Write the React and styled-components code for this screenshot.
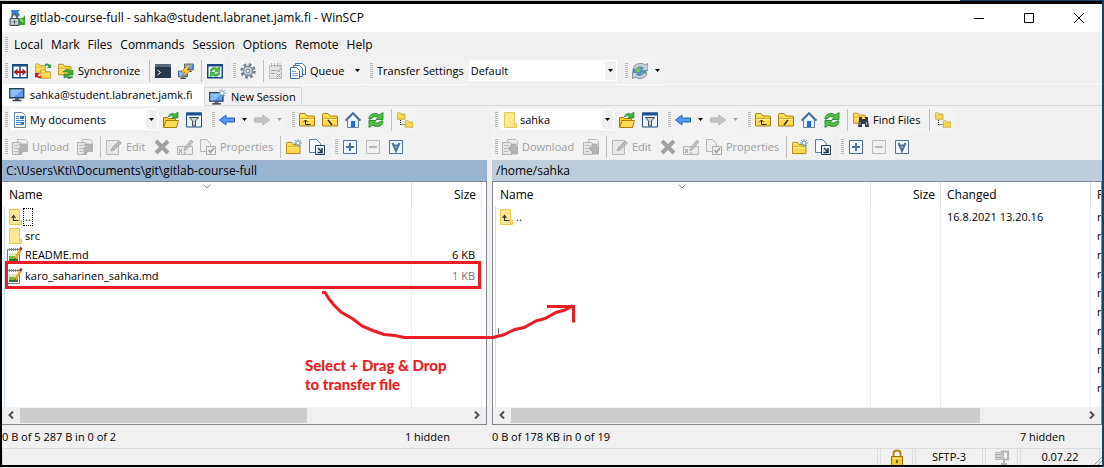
import React from "react";
import styled, { createGlobalStyle } from "styled-components";

const GlobalStyle = createGlobalStyle`
  * { box-sizing: border-box; }
  body { margin: 0; }
  body, button, select {
    font-family: "Open Sans", "Noto Sans", sans-serif;
    font-size: 11px;
    line-height: 16px;
    color: #000;
  }
  button, select { border: 0; background: none; padding: 0; margin: 0; }
`;

const Desktop = styled.div`
  min-height: 100vh;
  display: flex;
  flex-direction: column;
  padding: 1px 2px 1px 0;
  background: linear-gradient(90deg, #c9d1cd 87%, #17456a 87%) top / 100% 1px no-repeat,
    linear-gradient(#f0f0f0, #f0f0f0) bottom / 100% 1px no-repeat, #17456a;
`;
const Window = styled.main`
  flex: 1;
  display: flex;
  flex-direction: column;
  border: solid #000;
  border-width: 3px 0 2px 2px;
  background: #f0f0f0;
  overflow: hidden;
`;
const TitleBar = styled.header`
  display: flex;
  align-items: center;
  height: 28px;
  padding-left: 7px;
  gap: 4px;
  background: #fff;
`;
const Title = styled.h1`
  flex: 1;
  margin: 0;
  font-size: 12px;
  font-weight: 400;
`;
const CaptionButton = styled.button`
  display: grid;
  place-items: center;
  width: 46px;
  height: 28px;
`;
const MenuBar = styled.nav`
  display: flex;
  align-items: center;
  height: 25px;
  padding-left: 3px;
`;
const MenuItem = styled.button`
  padding: 0 2px 0 6px;
  font-size: 12px;
  white-space: nowrap;
`;
const ToolBar = styled.div`
  display: flex;
  align-items: center;
  height: 27px;
`;
const ToolGroup = styled.div`
  display: flex;
  align-items: center;
  height: 25px;
  padding-left: 3px;
  margin-right: 4px;
  background: #f2f2f2;
`;
const Grip = styled.span`
  width: 3px;
  height: 16px;
  background: repeating-linear-gradient(#b4b4b4 0 1px, transparent 1px 2px);
`;
const Separator = styled.span`
  width: 1px;
  height: 22px;
  margin: 0 1px 0 4px;
  background: #bdbdbd;
`;
const ToolButton = styled.button`
  display: flex;
  align-items: center;
  gap: 4px;
  height: 24px;
  min-width: ${(p) => p.$minWidth || 0}px;
  padding: 0 3px 0 4px;
  white-space: nowrap;
  color: ${(p) => (p.disabled ? "#a0a0a0" : "#000")};
`;
const Label = styled.label`
  padding: 0 3px 0 4px;
  white-space: nowrap;
`;
const Picker = styled.span`
  display: grid;
  align-items: center;
  width: ${(p) => p.$width}px;
  height: 21px;
  margin: 0 1px 0 2px;
  background: #fff;
  & > * { grid-area: 1 / 1; }
  & > svg { margin-left: 2px; pointer-events: none; }
`;
const PickerSelect = styled.select`
  width: 100%;
  height: 21px;
  padding-left: ${(p) => (p.$icon ? 20 : 2)}px;
  appearance: none;
`;
const PickerArrow = styled.span`
  display: grid;
  place-items: center;
  justify-self: end;
  width: 11px;
  height: 19px;
  margin-right: 1px;
  background: #f0f0f0;
  pointer-events: none;
`;
const Tabs = styled.div`
  display: flex;
  align-items: flex-end;
  height: 22px;
  border-top: 1px solid #fafafa;
  box-shadow: inset 0 -1px #d9d9d9;
`;
const Tab = styled.button`
  display: flex;
  align-items: center;
  gap: 5px;
  height: ${(p) => (p.$active ? 22 : 19)}px;
  min-width: ${(p) => (p.$active ? 202 : 98)}px;
  padding: 0 4px 0 ${(p) => (p.$active ? 7 : 4)}px;
  border: solid #d9d9d9;
  border-width: ${(p) => (p.$active ? "0" : "1px")};
  background: ${(p) => (p.$active ? "#fff" : "#f0f0f0")};
  white-space: nowrap;
`;
const Commander = styled.div`
  flex: 1;
  position: relative;
  display: grid;
  grid-template-columns: 485fr 5px 610fr;
`;
const Panel = styled.section`
  grid-column: ${(p) => p.$column};
  grid-row: 1;
  display: flex;
  flex-direction: column;
  min-width: 0;
`;
const PathBar = styled.div`
  height: 21px;
  padding: 3px 4px;
  background: ${(p) => (p.$active ? "#99b4d1" : "#bfcddb")};
  font-size: 12px;
  white-space: nowrap;
  overflow: hidden;
`;
const ListBox = styled.div`
  flex: 1;
  display: flex;
  flex-direction: column;
  min-height: 244px;
  border: 1px solid #828790;
  border-left-width: ${(p) => (p.$remote ? 1 : 0)}px;
  background: #fff;
`;
const columnLine = (offset) =>
  `linear-gradient(#e5effa, #e5effa) right ${offset}px top 0 / 1px 100% no-repeat`;
const Rows = styled.div`
  flex: 1;
  background: ${(p) => p.$lines.map(columnLine).join(", ")},
    linear-gradient(#c4dcf6, #c4dcf6) 2px 25px / 1px 100% no-repeat;
`;
const Table = styled.table`
  width: 100%;
  table-layout: fixed;
  border-collapse: separate;
  border-spacing: 0;
`;
const Head = styled.th`
  width: ${(p) => (p.$width ? p.$width + "px" : "auto")};
  height: 25px;
  padding: 0 ${(p) => (p.$last ? 0 : 5)}px 0 ${(p) => (p.$empty ? 0 : p.$narrow ? 6 : 7)}px;
  border-right: ${(p) => (p.$last ? 0 : 1)}px solid #e0e0e0;
  font-size: 12px;
  font-weight: 400;
  text-align: ${(p) => p.$align || "left"};
  position: relative;
  background: #fff;
  white-space: nowrap;
  overflow: hidden;
`;
const SortMark = styled.svg`
  position: absolute;
  top: 2px;
  left: calc(50% - 4px);
`;
const Row = styled.tr`
  height: ${(p) => (p.$dropped ? 24 : 19)}px;
`;
const Cell = styled.td`
  padding: 0 ${(p) => (p.$align ? 7 : 0)}px 0 ${(p) => (p.$narrow ? 6 : 5)}px;
  text-align: ${(p) => p.$align || "left"};
  color: ${(p) => (p.$dim ? "#777" : "#000")};
  white-space: nowrap;
  overflow: hidden;
`;
const FileName = styled.span`
  display: flex;
  align-items: center;
  gap: 2px;
`;
const Focus = styled.span`
  padding: 0 1px;
  margin: 0 -1px;
  outline: ${(p) => (p.$on ? "1px dotted #000" : "none")};
`;
const ScrollBar = styled.div`
  display: flex;
  align-items: center;
  height: 17px;
  padding-bottom: 1px;
  background: #f0f0f0;
`;
const ScrollButton = styled.button`
  display: grid;
  place-items: center;
  width: 18px;
  height: 15px;
`;
const Track = styled.div`
  flex: 1;
  height: 15px;
`;
const Thumb = styled.div`
  width: ${(p) => p.$share}%;
  height: 15px;
  background: #cdcdcd;
`;
const PanelStatus = styled.div`
  display: flex;
  justify-content: space-between;
  height: 23px;
  padding: 4px 37px 0 0;
`;
const StatusBar = styled.footer`
  display: flex;
  gap: 2px;
  height: 17px;
  border-top: 1px solid #dcdcdc;
`;
const StatusCell = styled.div`
  display: flex;
  justify-content: center;
  width: ${(p) => (p.$width ? p.$width + "px" : "auto")};
  flex: ${(p) => (p.$width ? "none" : "1")};
  border: solid #dcdcdc;
  border-width: 0 1px;
`;
const SizeGrip = styled.span`
  position: relative;
  width: 0;
  & > svg { position: absolute; right: 0; bottom: 0; }
`;
const FramedArea = styled.div`
  grid-column: 1;
  grid-row: 1;
  position: relative;
  pointer-events: none;
`;
const Frame = styled.span`
  position: absolute;
  left: 3px;
  right: 6px;
  top: 155px;
  height: 28px;
  border: 3px solid #ed1c24;
`;
const ArrowDrawing = styled.svg`
  position: absolute;
  left: 310px;
  top: 120px;
  pointer-events: none;
`;
const Note = styled.p`
  position: absolute;
  left: 303px;
  top: 250px;
  margin: 0;
  font: 900 15px/19px Lato, sans-serif;
  color: #ed1c24;
`;

const Svg = ({ w = 16, h = 16, children }) => (
  <svg width={w} height={h} viewBox={`0 0 ${w} ${h}`} fill="none" aria-hidden="true">{children}</svg>
);
const Folder = ({ x = 0, y = 0, s = 1 }) => (
  <g transform={`translate(${x} ${y}) scale(${s})`}>
    <path d="M.5 14V2.500q0-1 1-1H6L8 4h6.500q1 0 1 1v9z" fill="#fbd94b" stroke="#ad7c0c" />
    <path d="M1 6.500h14" stroke="#d6a520" />
    <path d="M1.500 3h4M1.500 7.500h13" stroke="#fff1a0" />
  </g>
);
const AppIcon = () => (
  <Svg w={17} h={17}>
    <path d="M2 0h9L9 2l2 3-3 3-3-3-2 2z" fill="#3880dc" />
    <path d="m16 5v10H8l2-2-2-3 3-2 3 0z" fill="#2faa2c" />
    <path d="m11 9 3 3" stroke="#8be66b" strokeWidth="2" />
    <path d="M3 9V7q0-3 2.500-3T8 7v2" stroke="#59636d" strokeWidth="1.600" />
    <path d="M1 8.500h9v7H1z" fill="#a6b1bd" stroke="#44505b" />
    <path d="M2 10h7M2 13h7" stroke="#e1e6eb" />
    <path d="M5.500 10.500v3" stroke="#333" />
  </Svg>
);
const Compare = () => (
  <Svg>
    <path d="M.75 1.750h14.500v13H.750zM8 2v13" fill="#fff" stroke="#164a86" strokeWidth="1.500" />
    <path d="M1 2.500h14" stroke="#164a86" strokeWidth="2" />
    <path d="m1.500 9 4-3.500V8h5V5.500l4 3.500-4 3.500V10h-5v2.500z" fill="#b51418" />
  </Svg>
);
const SyncBrowse = () => (
  <Svg>
    <Folder s={0.66} /><Folder x={5.5} y={6} s={0.66} />
    <path d="M10 2q4-2 5 3" stroke="#2f9e35" strokeWidth="2" /><path d="m12 5h4V1z" fill="#2f9e35" />
    <path d="M6 14q-4 1-5-3" stroke="#d01818" strokeWidth="2" /><path d="M0 15v-5h5z" fill="#d01818" />
  </Svg>
);
const SyncFolder = () => (
  <Svg>
    <Folder s={0.84} />
    <path d="M5 9q4-5 8-1l2-1v5h-5l1.500-2Q9 8 5 9z" fill="#3cae3c" stroke="#1d7a26" strokeWidth=".6" />
    <path d="M15 14q-4 3-7 0l-2 1v-4h4l-1 2q3 1 6 1z" fill="#3cae3c" stroke="#1d7a26" strokeWidth=".6" />
  </Svg>
);
const Terminal = () => (
  <Svg>
    <path d="M0 1h16v14H0z" fill="#2a3749" /><path d="M0 1h16v3H0z" fill="#57677c" />
    <path d="m2.500 7 3 2.500-3 2.500" stroke="#fff" />
  </Svg>
);
const Screen = ({ x = 0, y = 0, s = 1 }) => (
  <g transform={`translate(${x} ${y}) scale(${s})`}>
    <path d="M.75 1.750h14v9H.750z" fill="#5c9cf0" stroke="#2d3e54" strokeWidth="1.300" />
    <path d="M1.500 2.500h12.500L5 10H1.500z" fill="#a4ccfa" opacity=".7" />
    <path d="M6 11h4v2H6z" fill="#56606c" /><path d="M3.500 13.500h9" stroke="#36424f" strokeWidth="1.500" />
  </g>
);
const Monitor = () => <Svg><Screen /></Svg>;
const MonitorNew = () => (
  <Svg w={17}>
    <Screen y={2} s={0.95} />
    <path d="M13 0v8M9 4h8M10 1l6 6M16 1l-6 6" stroke="#84abc7" /><circle cx="13" cy="4" r="2" fill="#fff" stroke="#84abc7" />
  </Svg>
);
const Putty = () => (
  <Svg>
    <Screen x={6} y={0} s={0.63} /><Screen x={0} y={7} s={0.63} />
    <path d="M11 1 3 9h4l-3 6 9-8H9l3-5z" fill="#ffd43e" stroke="#a56d05" strokeWidth=".7" />
  </Svg>
);
const RefreshShape = () => (
  <>
    <path d="M1 7Q1 2 7 1.500q3 0 4 1.500l4-2.500v7H8l2-2Q6 3 3 7z" fill="#4fc043" stroke="#15801e" strokeWidth=".8" />
    <path d="M15 9q0 5-6 5.500-3 0-4-1.500l-4 2.500v-7h7l-2 2q4 2 7-1.500z" fill="#4fc043" stroke="#15801e" strokeWidth=".8" />
  </>
);
const Refresh = () => <Svg><RefreshShape /></Svg>;
const SyncPanels = () => (
  <Svg>
    <path d="M.75 1.750h14.500v13H.750z" fill="#fff" stroke="#164a86" strokeWidth="1.500" />
    <path d="M1 2.500h14" stroke="#164a86" strokeWidth="2" />
    <g transform="translate(2.500 3.500) scale(.68)"><RefreshShape /></g>
  </Svg>
);
const Gear = () => (
  <Svg>
    <circle cx="8" cy="8" r="6.500" stroke="#697988" strokeWidth="2.500" strokeDasharray="2.600 2.500" />
    <circle cx="8" cy="8" r="4.500" fill="#d9e0e7" stroke="#778694" strokeWidth="1.400" />
    <circle cx="8" cy="8" r="2" fill="#f2f2f2" stroke="#697988" />
  </Svg>
);
const QueueList = () => (
  <Svg w={14}>
    <path d="M.5 2.500h12v13H.500z" fill="#e4e4e4" stroke="#bdbdbd" />
    <path d="M2.500 0v4M5.500 0v4M8.500 0v4M11 0v4" stroke="#b5b5b5" />
    <path d="M2 7.500h5M2 10.500h4M8 7l1.500 2L12 5M7.500 10.500l4 4M11.500 10.500l-4 4" stroke="#a2a2a2" />
  </Svg>
);
const Queue = () => (
  <Svg>
    <path d="M5.500.5h7l3 3v8h-10z" fill="#fff" stroke="#3f74a8" />
    <path d="M3.500 2.500h6l3 3v8h-9z" fill="#eef5fc" stroke="#3f74a8" />
    <path d="M.5 4.500h6l3 3v8h-9z" fill="#fff" stroke="#3f74a8" />
    <path d="M2 8.500h4M2 10.500h6M2 12.500h6" stroke="#7ba5d0" />
  </Svg>
);
const Globe = () => (
  <Svg>
    <circle cx="7.500" cy="8.500" r="6.500" fill="#4a93dc" stroke="#486984" />
    <path d="m3 5 4-1 2 3-2 2H4zM9 10l4-1-1 4-3 2z" fill="#75c05c" />
    <path d="M1 7Q2 0 9 .5q3 0 4 1.500l3-1.500v7H9l2.500-2.500Q7 2 4 6z" fill="#c4cfd8" stroke="#687887" strokeWidth=".7" />
    <path d="M15 10q-1 5-7 5.500-3 0-4-1.500l-3.500 1.500v-6H7l-2.500 2Q8 14 12 10z" fill="#c4cfd8" stroke="#687887" strokeWidth=".7" />
  </Svg>
);
const DocsIcon = () => (
  <Svg>
    <path d="M2.500.5h8l3 3v12h-11z" fill="#fff" stroke="#6c8799" />
    <path d="M4 4.500h3M4 6.500h3M4 8.500h8M4 10.500h5M4 12.500h8" stroke="#2f8ad0" />
    <path d="M8 4h4v3H8zM9 10h3v2H9z" fill="#2a78b8" />
  </Svg>
);
const PlainFolderShape = () => (
  <>
    <path d="M2.500.5h10v11h2v4h-12z" fill="#ffe797" stroke="#ebc84c" />
    <path d="M12.500 11.500v4" stroke="#ebc84c" />
  </>
);
const PlainFolder = () => <Svg><PlainFolderShape /></Svg>;
const ParentFolder = () => (
  <Svg>
    <PlainFolderShape />
    <path d="M6.500 7v4.500h5M4.500 9l2-2.500 2 2.500" stroke="#333" strokeWidth="1.200" />
  </Svg>
);
const OpenFolder = () => (
  <Svg>
    <path d="M.5 15V5.500h4l1 1h7V9" fill="#f5c933" stroke="#ad7c0c" />
    <path d="M.7 15.500 3 8.500h12.500l-2 7z" fill="#fddc55" stroke="#ad7c0c" />
    <path d="M5 5q2-5 7-3l3-2v6H9l2-1.500Q8 3 5 5z" fill="#43b443" stroke="#1c8028" strokeWidth=".6" />
  </Svg>
);
const Filter = () => (
  <Svg>
    <path d="M.5 1h15v14H.500z" fill="#eaf2fb" stroke="#1c508e" /><path d="M0 2h16" stroke="#1c508e" strokeWidth="3" />
    <path d="M3.500 5.500h9L9.500 9v5h-3V9z" fill="#c9d0d6" stroke="#404a53" />
  </Svg>
);
const Arrow = ({ back }) => (
  <Svg>
    <path
      d={back ? "M.5 8 7 3v3h8.500v4H7v3z" : "M15.500 8 9 3v3H.500v4H9v3z"}
      fill={back ? "#4a97f5" : "#c6c6c6"}
      stroke={back ? "#2364b8" : "#b2b2b2"}
    />
  </Svg>
);
const FolderUp = () => <Svg><Folder /><path d="M6.500 8v4.500h5M4.500 10l2-2 2 2" stroke="#222" /></Svg>;
const FolderRoot = ({ slash }) => (
  <Svg><Folder /><path d={slash ? "m10 8-4 5" : "m6 8 4 5"} stroke="#222" strokeWidth="1.300" /></Svg>
);
const Home = () => (
  <Svg>
    <path d="M2.500 8v7.500h11V8L8 2z" fill="#edf3fa" stroke="#627f9e" />
    <path d="M.5 8.500 8 1l7.500 7.500" stroke="#466c97" strokeWidth="1.800" /><path d="M6 9h4v6H6z" fill="#1c6ae0" />
  </Svg>
);
const Tree = () => (
  <Svg>
    <Folder s={0.52} /><Folder x={8} y={8} s={0.52} />
    <path d="M3.500 8v5M3.500 12.500H8" stroke="#222" strokeDasharray="1 1" />
  </Svg>
);
const Transfer = ({ down }) => (
  <Svg>
    <path d="M5.500.5h8l2 2v10h-10z" fill="#eee" stroke="#bbb" /><path d="M.5 3.500h8l1 1v11h-9z" fill="#e6e6e6" stroke="#b2b2b2" />
    <path d="M2 6.500h5M2 9.500h5M2 12.500h4" stroke="#bbb" />
    <path d={down ? "M7 8h2V5h5v3l2 0v7H9l2-2-4-2z" : "M7 15V9l2-2-2-2h8v8l-3-2-3 4z"} fill="#b4b4b4" stroke="#9f9f9f" strokeWidth=".6" />
  </Svg>
);
const Edit = () => (
  <Svg>
    <path d="M.5 1.500h12v14H.500z" fill="#e8e8e8" stroke="#b8b8b8" />
    <path d="m5 12 1-3 7-7 2.500 2L8 11z" fill="#bbb" stroke="#9d9d9d" strokeWidth=".7" />
  </Svg>
);
const Delete = () => <Svg><path d="m2 2 12 12M14 2 2 14" stroke="#a2a2a2" strokeWidth="4" /></Svg>;
const Rename = () => (
  <Svg>
    <path d="M.5 7.500h15v8H.500z" fill="#eaeaea" stroke="#b5b5b5" /><path d="m2 10 3 4M5 10l-3 4M7 14h2" stroke="#999" />
    <path d="m7 12 1-4 6-7 2 2-6 7z" fill="#c4c4c4" stroke="#a2a2a2" strokeWidth=".7" />
  </Svg>
);
const Properties = () => (
  <Svg>
    <path d="M.5.5h6l4 4v8H.500z" fill="#eee" stroke="#b8b8b8" /><path d="M6.500 7.500h9v8h-9z" fill="#eee" stroke="#aaa" />
    <path d="m8.500 11 2 2.500L14 9" stroke="#999" strokeWidth="1.500" />
  </Svg>
);
const NewFolder = () => (
  <Svg>
    <g transform="translate(0 2)"><Folder s={0.9} /></g>
    <path d="M12 0v8M8 4h8M9 1l6 6M15 1 9 7" stroke="#7499bc" /><circle cx="12" cy="4" r="2" fill="#fff" stroke="#7499bc" />
  </Svg>
);
const Shortcut = () => (
  <Svg>
    <path d="M.5.5h7l4 4v9H.500z" fill="#f6faff" stroke="#557fa9" /><path d="M6.500 6.500h9v9h-9z" fill="#e7eef6" stroke="#293f59" />
    <path d="m9 9 4 4m0-4v4.500H8.500" stroke="#1c3047" strokeWidth="1.500" />
  </Svg>
);
const SelectMark = ({ kind }) => {
  const color = kind === "minus" ? "#bcbcbc" : "#4d719c";
  return (
    <Svg>
      <path d="M1.500 1.500h13v13h-13z" fill={kind === "minus" ? "#f0f0f0" : "#f2f7fd"} stroke={color} />
      {kind === "invert"
        ? <path d="m4.500 4 3.500 8 3.500-8M6 6.500h4" stroke={color} strokeWidth="2" />
        : <path d={kind === "plus" ? "M4 8h8M8 4v8" : "M4 8h8"} stroke={color} strokeWidth="2" />}
    </Svg>
  );
};
const Find = () => (
  <Svg>
    <Folder s={0.8} />
    <path d="M6 8V5h3v2h3V5h3v3l1 7h-4v-3H9v3H5z" fill="#303946" /><path d="M7 10v3M13.500 10v3" stroke="#aab3bd" />
  </Svg>
);
const Document = () => (
  <Svg>
    <path d="M.5 2.500h12v13H.500z" fill="#fff" stroke="#777" />
    <path d="M2.500 1v3M4.500 1v3M6.500 1v3M8.500 1v3M10.500 1v3" stroke="#8d8d8d" />
    <path d="M2 7h9v7H2z" fill="#72bd30" /><path d="M2 6h9v3H2z" fill="#d6eeb8" /><path d="M2 12h9v2H2z" fill="#2a7827" />
    <path d="m8 12 5.500-9" stroke="#f4a329" strokeWidth="2.500" /><path d="m13 3 1.500-2.500" stroke="#b1202d" strokeWidth="2.500" />
    <path d="m7 13 1.500-2" stroke="#333" />
  </Svg>
);
const Lock = () => (
  <Svg w={14} h={17}>
    <path d="M3.500 8V4.500q0-3 3.500-3t3.500 3V8" stroke="#b48718" strokeWidth="2" />
    <path d="M1.500 7.500h11v9h-11z" fill="#f6c92f" stroke="#a2700a" /><path d="M3 9.500h8" stroke="#ffec92" />
    <path d="M7 11v3" stroke="#51390a" strokeWidth="1.500" />
  </Svg>
);
const Compression = () => (
  <Svg>
    <path d="M1.500 3.500h8v7h-8z" fill="#d4d4d4" stroke="#bbb" /><path d="M2 5.500h7M2 8.500h7" stroke="#aaa" />
    <path d="M7 2.500h7v8h-4v5M7 15h6" stroke="#b5b5b5" strokeWidth="2" />
  </Svg>
);
const Caret = ({ dim }) => <Svg w={5} h={3}><path d="M0 0h5L2.500 3z" fill={dim ? "#a5a5a5" : "#000"} /></Svg>;

const Tool = ({ name, icon, text, disabled, menu, minWidth }) => (
  <>
    <ToolButton type="button" aria-label={name} disabled={disabled} $minWidth={minWidth}>{icon}{text}</ToolButton>
    {menu && <ToolButton type="button" aria-label={`${name} menu`} disabled={disabled}><Caret dim={disabled} /></ToolButton>}
  </>
);
const Drop = ({ id, name, value, icon, width }) => (
  <Picker $width={width}>
    <PickerSelect id={id} aria-label={name} $icon={!!icon} defaultValue={value}><option>{value}</option></PickerSelect>
    {icon}
    <PickerArrow><Caret /></PickerArrow>
  </Picker>
);

const LocationBar = ({ remote }) => (
  <ToolBar>
    <ToolGroup>
      <Grip />
      <Drop
        name={remote ? "Remote directory" : "Local directory"}
        value={remote ? "sahka" : "My documents"}
        icon={remote ? <PlainFolder /> : <DocsIcon />}
        width={remote ? 114 : 148}
      />
      <Tool name="Open directory" icon={<OpenFolder />} />
      <Tool name="Filter" icon={<Filter />} />
    </ToolGroup>
    <ToolGroup>
      <Grip />
      <Tool name="Back" icon={<Arrow back />} menu />
      <Tool name="Forward" icon={<Arrow />} menu disabled />
    </ToolGroup>
    <ToolGroup>
      <Grip />
      <Tool name="Parent directory" icon={<FolderUp />} />
      <Tool name="Root directory" icon={<FolderRoot slash={remote} />} />
      <Tool name="Home directory" icon={<Home />} />
      <Tool name="Refresh" icon={<Refresh />} />
      <Separator />
      {remote && <><Tool icon={<Find />} text="Find Files" minWidth={76} /><Separator /></>}
      <Tool name="Tree" icon={<Tree />} />
    </ToolGroup>
  </ToolBar>
);
const FileBar = ({ remote }) => (
  <ToolBar>
    <ToolGroup>
      <Grip />
      <Tool
        icon={<Transfer down={remote} />}
        text={remote ? "Download" : "Upload"}
        minWidth={remote ? 81 : 65}
        disabled
      />
      <Tool name="Transfer in background" icon={<Transfer down={remote} />} disabled />
      <Separator />
      <Tool icon={<Edit />} text="Edit" minWidth={48} disabled />
      <Tool name="Delete" icon={<Delete />} disabled />
      <Tool name="Rename" icon={<Rename />} disabled />
      <Tool icon={<Properties />} text="Properties" minWidth={80} disabled />
      <Separator />
      <Tool name="Create directory" icon={<NewFolder />} />
      <Tool name="Create link" icon={<Shortcut />} />
    </ToolGroup>
    <ToolGroup>
      <Grip />
      <Tool name="Select files" icon={<SelectMark kind="plus" />} />
      <Tool name="Unselect files" icon={<SelectMark kind="minus" />} disabled />
      <Tool name="Invert selection" icon={<SelectMark kind="invert" />} />
    </ToolGroup>
  </ToolBar>
);
const Sort = () => <SortMark width="8" height="5" viewBox="0 0 8 5" fill="none"><path d="m.5.5 3.500 3.500L7.500.5" stroke="#8a8a8a" /></SortMark>;
const Scroll = ({ share }) => (
  <ScrollBar>
    <ScrollButton type="button" aria-label="Scroll left"><Svg w={6} h={8}><path d="M5 .5 1.500 4 5 7.500" stroke="#505050" strokeWidth="2" /></Svg></ScrollButton>
    <Track><Thumb $share={share} /></Track>
    <ScrollButton type="button" aria-label="Scroll right"><Svg w={6} h={8}><path d="M1 .5 4.500 4 1 7.500" stroke="#505050" strokeWidth="2" /></Svg></ScrollButton>
  </ScrollBar>
);

const localFiles = [
  { name: "..", icon: <ParentFolder />, focus: true },
  { name: "src", icon: <PlainFolder /> },
  { name: "README.md", icon: <Document />, size: "6 KB" },
  { name: "karo_saharinen_sahka.md", icon: <Document />, size: "1 KB", dropped: true },
];
const remoteRows = Array.from({ length: 10 }, (_, i) =>
  i === 0 ? { name: "..", icon: <ParentFolder />, changed: "16.8.2021 13.20.16" } : {}
);
const menus = ["Local", "Mark", "Files", "Commands", "Session", "Options", "Remote", "Help"];

export default function App() {
  return (
    <Desktop>
      <GlobalStyle />
      <Window>
        <TitleBar>
          <AppIcon />
          <Title>gitlab-course-full - sahka@student.labranet.jamk.fi - WinSCP</Title>
          <CaptionButton type="button" aria-label="Minimize"><Svg w={10} h={10}><path d="M0 5.500h10" stroke="#000" /></Svg></CaptionButton>
          <CaptionButton type="button" aria-label="Maximize"><Svg w={10} h={10}><path d="M.5.5h9v9h-9z" stroke="#000" /></Svg></CaptionButton>
          <CaptionButton type="button" aria-label="Close"><Svg w={10} h={10}><path d="m0 0 10 10M10 0 0 10" stroke="#000" /></Svg></CaptionButton>
        </TitleBar>
        <MenuBar>
          <Grip />
          {menus.map((m) => <MenuItem type="button" key={m}>{m}</MenuItem>)}
        </MenuBar>
        <ToolBar>
          <ToolGroup>
            <Grip />
            <Tool name="Compare directories" icon={<Compare />} />
            <Tool name="Synchronize browsing" icon={<SyncBrowse />} />
            <Tool icon={<SyncFolder />} text="Synchronize" minWidth={91} />
            <Separator />
            <Tool name="Open terminal" icon={<Terminal />} />
            <Tool name="Open in PuTTY" icon={<Putty />} />
            <Separator />
            <Tool name="Keep up to date" icon={<SyncPanels />} />
          </ToolGroup>
          <ToolGroup>
            <Grip />
            <Tool name="Preferences" icon={<Gear />} />
            <Separator />
            <Tool name="Queue processing" icon={<QueueList />} disabled />
            <Tool name="Queue" icon={<Queue />} text="Queue" minWidth={65} menu />
          </ToolGroup>
          <ToolGroup>
            <Grip />
            <Label htmlFor="transfer">Transfer Settings</Label>
            <Drop id="transfer" value="Default" width={148} />
          </ToolGroup>
          <ToolGroup>
            <Grip />
            <Tool name="Sites" icon={<Globe />} menu />
          </ToolGroup>
        </ToolBar>
        <Tabs>
          <Tab type="button" $active><Monitor />sahka@student.labranet.jamk.fi</Tab>
          <Tab type="button"><MonitorNew />New Session</Tab>
        </Tabs>
        <Commander>
          <Panel $column={1}>
            <LocationBar />
            <FileBar />
            <PathBar $active>C:\Users\Kti\Documents\git\gitlab-course-full</PathBar>
            <ListBox>
              <Rows $lines={[74, 4]}>
                <Table>
                  <thead><tr><Head>Name<Sort /></Head><Head $width={70} $align="right">Size</Head><Head $width={4} $last $empty /></tr></thead>
                  <tbody>
                    {localFiles.map((f) => (
                      <Row key={f.name} $dropped={f.dropped}>
                        <Cell><FileName>{f.icon}<Focus $on={f.focus}>{f.name}</Focus></FileName></Cell>
                        <Cell $align="right" $dim={f.dropped}>{f.size}</Cell>
                      </Row>
                    ))}
                  </tbody>
                </Table>
              </Rows>
              <Scroll share={64} />
            </ListBox>
            <PanelStatus><span>0 B of 5 287 B in 0 of 2</span><span>1 hidden</span></PanelStatus>
          </Panel>
          <Panel $column={3}>
            <LocationBar remote />
            <FileBar remote />
            <PathBar>/home/sahka</PathBar>
            <ListBox $remote>
              <Rows $lines={[230, 160, 10]}>
                <Table>
                  <thead>
                    <tr>
                      <Head>Name<Sort /></Head>
                      <Head $width={70} $align="right">Size</Head>
                      <Head $width={150} $narrow>Changed</Head>
                      <Head $width={10} $last $narrow>R</Head>
                    </tr>
                  </thead>
                  <tbody>
                    {remoteRows.map((f, i) => (
                      <Row key={i}>
                        <Cell>{f.name && <FileName>{f.icon}{f.name}</FileName>}</Cell>
                        <Cell />
                        <Cell $narrow>{f.changed}</Cell>
                        <Cell $narrow>r</Cell>
                      </Row>
                    ))}
                  </tbody>
                </Table>
              </Rows>
              <Scroll share={82} />
            </ListBox>
            <PanelStatus><span>0 B of 178 KB in 0 of 19</span><span>7 hidden</span></PanelStatus>
          </Panel>
          <FramedArea><Frame /></FramedArea>
          <ArrowDrawing width="280" height="120" viewBox="312 226 280 120" fill="none" stroke="#ed1c24" strokeWidth="3">
            <path d="M498.500 328v9" stroke="#777" strokeWidth="1" />
            <path d="M322 292.500h3L329 299 333 304 341 312 353 319 362 326 374 331 384 334.500 395 335.500 404 337.500H493L503 335 515 329.500 524 327.500 536 321 545 318.500 556 312.500 565 310 573 305.500M547 306.500h26.500v16" />
          </ArrowDrawing>
          <Note>Select + Drag &amp; Drop<br />to transfer file</Note>
        </Commander>
        <StatusBar>
          <StatusCell />
          <StatusCell $width={33}><Lock /></StatusCell>
          <StatusCell $width={68}>SFTP-3</StatusCell>
          <StatusCell $width={33}><Compression /></StatusCell>
          <StatusCell $width={80}>0.07.22</StatusCell>
          <SizeGrip><Svg w={8} h={8}><path d="M0 8 8 0M4 8l4-4" stroke="#999" /></Svg></SizeGrip>
        </StatusBar>
      </Window>
    </Desktop>
  );
}
